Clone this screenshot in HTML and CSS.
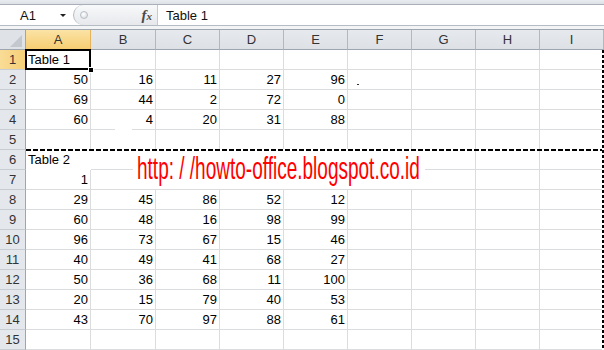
FILE: index.html
```html
<!DOCTYPE html>
<html>
<head>
<meta charset="utf-8">
<link rel="stylesheet" href="styles.css">
</head>
<body>
<div class="app">
  <div class="topstrip"></div>
  <div class="fbar">
    <div class="namebox"><span>A1</span><span class="dd"></span></div>
    <div class="capsule"><span class="knob"></span><span class="fx">f<span class="fxx">x</span></span></div>
    <div class="formula">Table 1</div>
  </div>
  <div class="fsep"></div>
  <div class="sheet">
    <div class="corner"><span class="tri"></span></div>
    <div class="ch sel">A</div><div class="ch">B</div><div class="ch">C</div><div class="ch">D</div><div class="ch">E</div><div class="ch">F</div><div class="ch">G</div><div class="ch">H</div><div class="ch">I</div>

    <div class="rh sel">1</div><div class="c">Table 1</div><div class="c"></div><div class="c"></div><div class="c"></div><div class="c"></div><div class="c"></div><div class="c"></div><div class="c"></div><div class="c"></div>
    <div class="rh">2</div><div class="c n">50</div><div class="c n">16</div><div class="c n">11</div><div class="c n">27</div><div class="c n">96</div><div class="c"><span class="speck"></span></div><div class="c"></div><div class="c"></div><div class="c"></div>
    <div class="rh">3</div><div class="c n">69</div><div class="c n">44</div><div class="c n">2</div><div class="c n">72</div><div class="c n">0</div><div class="c"></div><div class="c"></div><div class="c"></div><div class="c"></div>
    <div class="rh">4</div><div class="c n">60</div><div class="c n gapb">4</div><div class="c n">20</div><div class="c n">31</div><div class="c n">88</div><div class="c"></div><div class="c"></div><div class="c"></div><div class="c"></div>
    <div class="rh">5</div><div class="c"></div><div class="c"></div><div class="c"></div><div class="c"></div><div class="c"></div><div class="c"></div><div class="c"></div><div class="c"></div><div class="c"></div>
    <div class="rh">6</div><div class="c bare">Table 2</div><div class="c"></div><div class="c"></div><div class="c"></div><div class="c"></div><div class="c"></div><div class="c"></div><div class="c"></div><div class="c"></div>
    <div class="rh">7</div><div class="c n">1</div><div class="c"></div><div class="c"></div><div class="c"></div><div class="c"></div><div class="c"></div><div class="c"></div><div class="c"></div><div class="c"></div>
    <div class="rh">8</div><div class="c n">29</div><div class="c n">45</div><div class="c n">86</div><div class="c n">52</div><div class="c n">12</div><div class="c"></div><div class="c"></div><div class="c"></div><div class="c"></div>
    <div class="rh">9</div><div class="c n">60</div><div class="c n">48</div><div class="c n">16</div><div class="c n">98</div><div class="c n">99</div><div class="c"></div><div class="c"></div><div class="c"></div><div class="c"></div>
    <div class="rh">10</div><div class="c n">96</div><div class="c n">73</div><div class="c n">67</div><div class="c n">15</div><div class="c n">46</div><div class="c"></div><div class="c"></div><div class="c"></div><div class="c"></div>
    <div class="rh">11</div><div class="c n">40</div><div class="c n">49</div><div class="c n">41</div><div class="c n">68</div><div class="c n">27</div><div class="c"></div><div class="c"></div><div class="c"></div><div class="c"></div>
    <div class="rh">12</div><div class="c n">50</div><div class="c n">36</div><div class="c n">68</div><div class="c n">11</div><div class="c n">100</div><div class="c"></div><div class="c"></div><div class="c"></div><div class="c"></div>
    <div class="rh">13</div><div class="c n">20</div><div class="c n">15</div><div class="c n">79</div><div class="c n">40</div><div class="c n">53</div><div class="c"></div><div class="c"></div><div class="c"></div><div class="c"></div>
    <div class="rh">14</div><div class="c n">43</div><div class="c n">70</div><div class="c n">97</div><div class="c n">88</div><div class="c n">61</div><div class="c"></div><div class="c"></div><div class="c"></div><div class="c"></div>
    <div class="rh">15</div><div class="c"></div><div class="c"></div><div class="c"></div><div class="c"></div><div class="c"></div><div class="c"></div><div class="c"></div><div class="c"></div><div class="c"></div>
  </div>

  <div class="selbox"><span class="handle"></span></div>
  <div class="pb-h"></div>
  <div class="pb-v"></div>
  <div class="url"><span class="urltext">http: / /howto-office.blogspot.co.id</span></div>
</div>
</body>
</html>
```

FILE: styles.css
```css
* { box-sizing: border-box; }

body {
  margin: 0;
  background: #fff;
  font-family: "Liberation Sans", Arial, sans-serif;
  font-size: 13px;
  color: #000;
}

.app {
  position: relative;
  width: 604px;
  height: 350px;
  overflow: hidden;
}

/* formula bar */
.topstrip {
  height: 5px;
  background: linear-gradient(#e9ecf0, #dde1e6);
  border-bottom: 1px solid #a9b0ba;
}

.fbar {
  display: flex;
  height: 20px;
  background: #fff;
}

.namebox {
  width: 73px;
  display: flex;
  align-items: center;
  justify-content: space-between;
  padding: 0 7px 0 20px;
  color: #111;
}

.dd {
  width: 0;
  height: 0;
  border-left: 3px solid transparent;
  border-right: 3px solid transparent;
  border-top: 3px solid #222;
  margin-top: 1px;
}

.capsule {
  width: 84px;
  display: flex;
  align-items: center;
  padding-left: 6px;
  border-left: 1px solid #b5bac2;
  border-radius: 10px 0 0 10px;
  background: linear-gradient(#f8f9fa, #e6e8ec);
}

.knob {
  width: 8px;
  height: 8px;
  border-radius: 50%;
  border: 1px solid #b8bdc4;
  background: radial-gradient(circle at 40% 35%, #ffffff, #d4d8dd);
}

.fx {
  margin-left: auto;
  margin-right: 5px;
  font-family: "Liberation Serif", "DejaVu Serif", serif;
  font-style: italic;
  font-weight: bold;
  font-size: 15px;
  color: #4a4a4a;
  line-height: 1;
}

.fxx {
  font-size: 11px;
}

.formula {
  flex: 1;
  display: flex;
  align-items: center;
  padding-left: 8px;
  border-left: 1px solid #c6cbd1;
  color: #111;
}

.fsep {
  height: 5px;
  border-top: 1px solid #b5bbc3;
  border-bottom: 1px solid #9da5af;
  background: #f3f4f6;
}

/* sheet grid */
.sheet {
  display: grid;
  grid-template-columns: 26px 65px 65px repeat(7, 64px);
  grid-auto-rows: 20px;
}

.corner {
  display: flex;
  align-items: flex-end;
  justify-content: flex-end;
  padding: 0 3px 2px 0;
  background: #dfe3e8;
  border-right: 1px solid #9da5af;
  border-bottom: 1px solid #9da5af;
}

.tri {
  width: 0;
  height: 0;
  border-left: 12px solid transparent;
  border-bottom: 12px solid #c3c8ce;
}

.ch {
  display: flex;
  align-items: center;
  justify-content: center;
  background: linear-gradient(#e6e9ed, #dde1e6);
  border-right: 1px solid #b3b8bf;
  border-bottom: 1px solid #9da5af;
  color: #333;
}

.ch.sel {
  background: linear-gradient(#fbe3a6, #f6cd72);
  border-right-color: #e5b35c;
  border-bottom-color: #f29436;
}

.rh {
  display: flex;
  align-items: center;
  justify-content: center;
  background: #e4e7ec;
  border-right: 1px solid #9da5af;
  border-bottom: 1px solid #c8cdd4;
  color: #333;
}

.rh.sel {
  background: linear-gradient(to right, #f9dc96, #f6cf78);
  border-right-color: #f29436;
}

.c {
  border-right: 1px solid #dadcdd;
  border-bottom: 1px solid #dadcdd;
  padding: 0 2px;
  line-height: 19px;
  white-space: nowrap;
  overflow: visible;
}

.c:nth-child(10n) {
  border-right-color: transparent;
}

.n {
  text-align: right;
}

.bare {
  border-right-color: transparent;
  border-bottom-color: transparent;
}

.gapb {
  border-bottom-color: transparent;
  background: linear-gradient(to right, #dadcdd 24px, #fff 24px 41px, #dadcdd 41px) left bottom / 100% 1px no-repeat border-box #fff;
}

.speck {
  display: inline-block;
  width: 2px;
  height: 1px;
  margin: 14px 0 0 7px;
  vertical-align: top;
  background: #333;
}

/* overlays */
.selbox {
  position: absolute;
  left: 25px;
  top: 49px;
  width: 66px;
  height: 21px;
  border: 2px solid #000;
}

.handle {
  position: absolute;
  right: -5px;
  bottom: -5px;
  width: 6px;
  height: 6px;
  background: #000;
  border: 1px solid #fff;
}

.pb-h {
  position: absolute;
  left: 26px;
  top: 149px;
  width: 578px;
  height: 2px;
  background: repeating-linear-gradient(to right, #000 0 5px, #fff 5px 7px);
}

.pb-v {
  position: absolute;
  left: 602px;
  top: 50px;
  width: 2px;
  height: 300px;
  background: repeating-linear-gradient(#000 0 3px, #fff 3px 5px);
}

.url {
  position: absolute;
  left: 133px;
  top: 151px;
  width: 292px;
  height: 38px;
  padding: 1px 0 0 4px;
  background: #fff;
  white-space: nowrap;
}

.urltext {
  display: inline-block;
  font-family: "Liberation Sans", Arial, sans-serif;
  font-size: 32px;
  line-height: 32px;
  color: #ff0000;
  transform: scaleX(0.594);
  transform-origin: left top;
}
```
